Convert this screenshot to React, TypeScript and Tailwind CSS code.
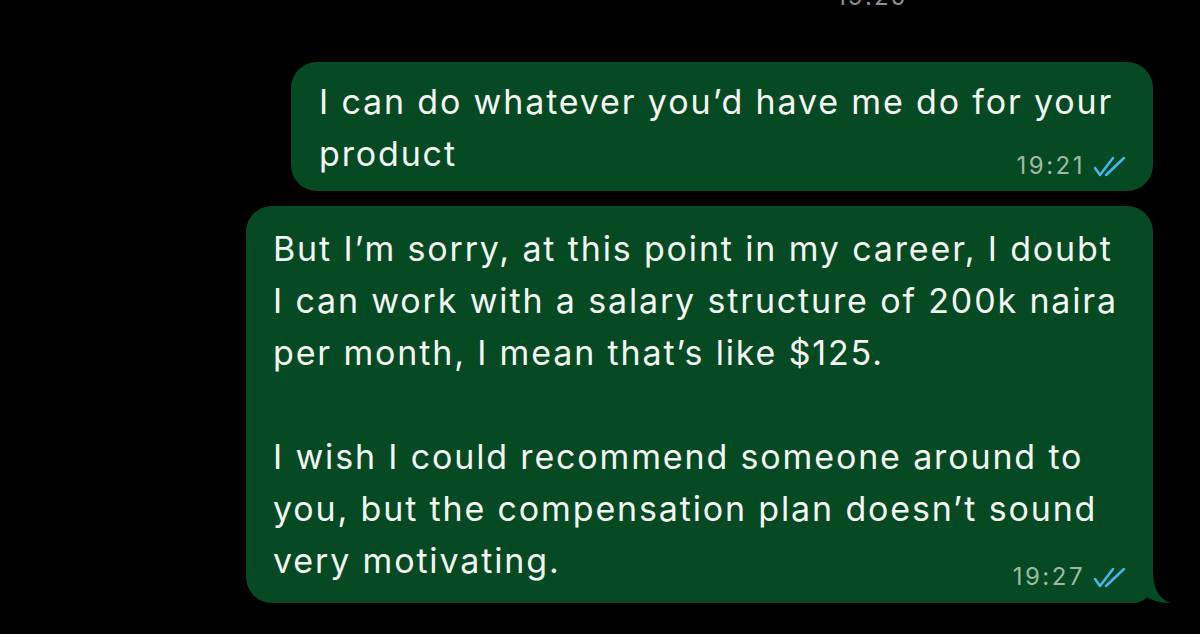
import React from "react";

const Ticks = () => (
  <svg width="34" height="22" viewBox="0 0 34 22" fill="none">
    <path
      d="M2 13 L7 20 L20 3"
      stroke="#45b8ec"
      strokeWidth="2.5"
      strokeLinecap="round"
      strokeLinejoin="round"
    />
    <path
      d="M13 20 L31 3"
      stroke="#45b8ec"
      strokeWidth="2.5"
      strokeLinecap="round"
      strokeLinejoin="round"
    />
  </svg>
);

interface MetaProps {
  time: string;
  className: string;
}

const Meta: React.FC<MetaProps> = ({ time, className }) => (
  <div className={`flex justify-end items-center gap-[8px] ${className}`}>
    <span className="text-[24px] leading-[22px] tracking-[2.5px] text-[#9fb9a4]">
      {time}
    </span>
    <Ticks />
  </div>
);

const first = ["I can do whatever you’d have me do for your", "product"];

const second = [
  "But I’m sorry, at this point in my career, I doubt",
  "I can work with a salary structure of 200k naira",
  "per month, I mean that’s like $125.",
  "\u00a0",
  "I wish I could recommend someone around to",
  "you, but the compensation plan doesn’t sound",
  "very motivating.",
];

export default function App() {
  return (
    <div
      className="h-[634px] w-[1200px] bg-black overflow-hidden flex flex-col"
      style={{ fontFamily: "Inter, 'Noto Sans', sans-serif" }}
    >
      <div className="h-[62px] flex justify-center pl-[544px]">
        <span className="-mt-[15px] text-[24px] leading-[24px] tracking-[2px] text-[#8e8e93]">
          19:20
        </span>
      </div>

      <div className="self-end mr-[47px] w-[862px] rounded-[26px] bg-[#064a24] pl-[28px] pr-[26px] pt-[14px] pb-[14px]">
        <div className="text-[34px] leading-[52px] tracking-[1.85px] text-[#f2f5f2] whitespace-nowrap">
          {first.map((line, i) => (
            <div key={i}>{line}</div>
          ))}
        </div>
        <Meta time="19:21" className="-mt-[25px]" />
      </div>

      <div className="relative self-end mr-[47px] mt-[15px] w-[907px] rounded-[26px] rounded-br-[20px] bg-[#064a24] pl-[27px] pr-[26px] pt-[17px] pb-[15px]">
        <div className="text-[34px] leading-[52px] tracking-[1.85px] text-[#f2f5f2] whitespace-nowrap">
          {second.map((line, i) => (
            <div key={i}>{line}</div>
          ))}
        </div>
        <Meta time="19:27" className="-mt-[21px]" />
        <svg
          className="absolute right-[-17px] bottom-0"
          width="40"
          height="45"
          viewBox="0 0 40 45"
        >
          <path
            d="M10 0 L23 0 L23 12 C23 30 28 40 40 45 C32 45 22 43 12 37 L10 30 Z"
            fill="#064a24"
          />
        </svg>
      </div>
    </div>
  );
}
